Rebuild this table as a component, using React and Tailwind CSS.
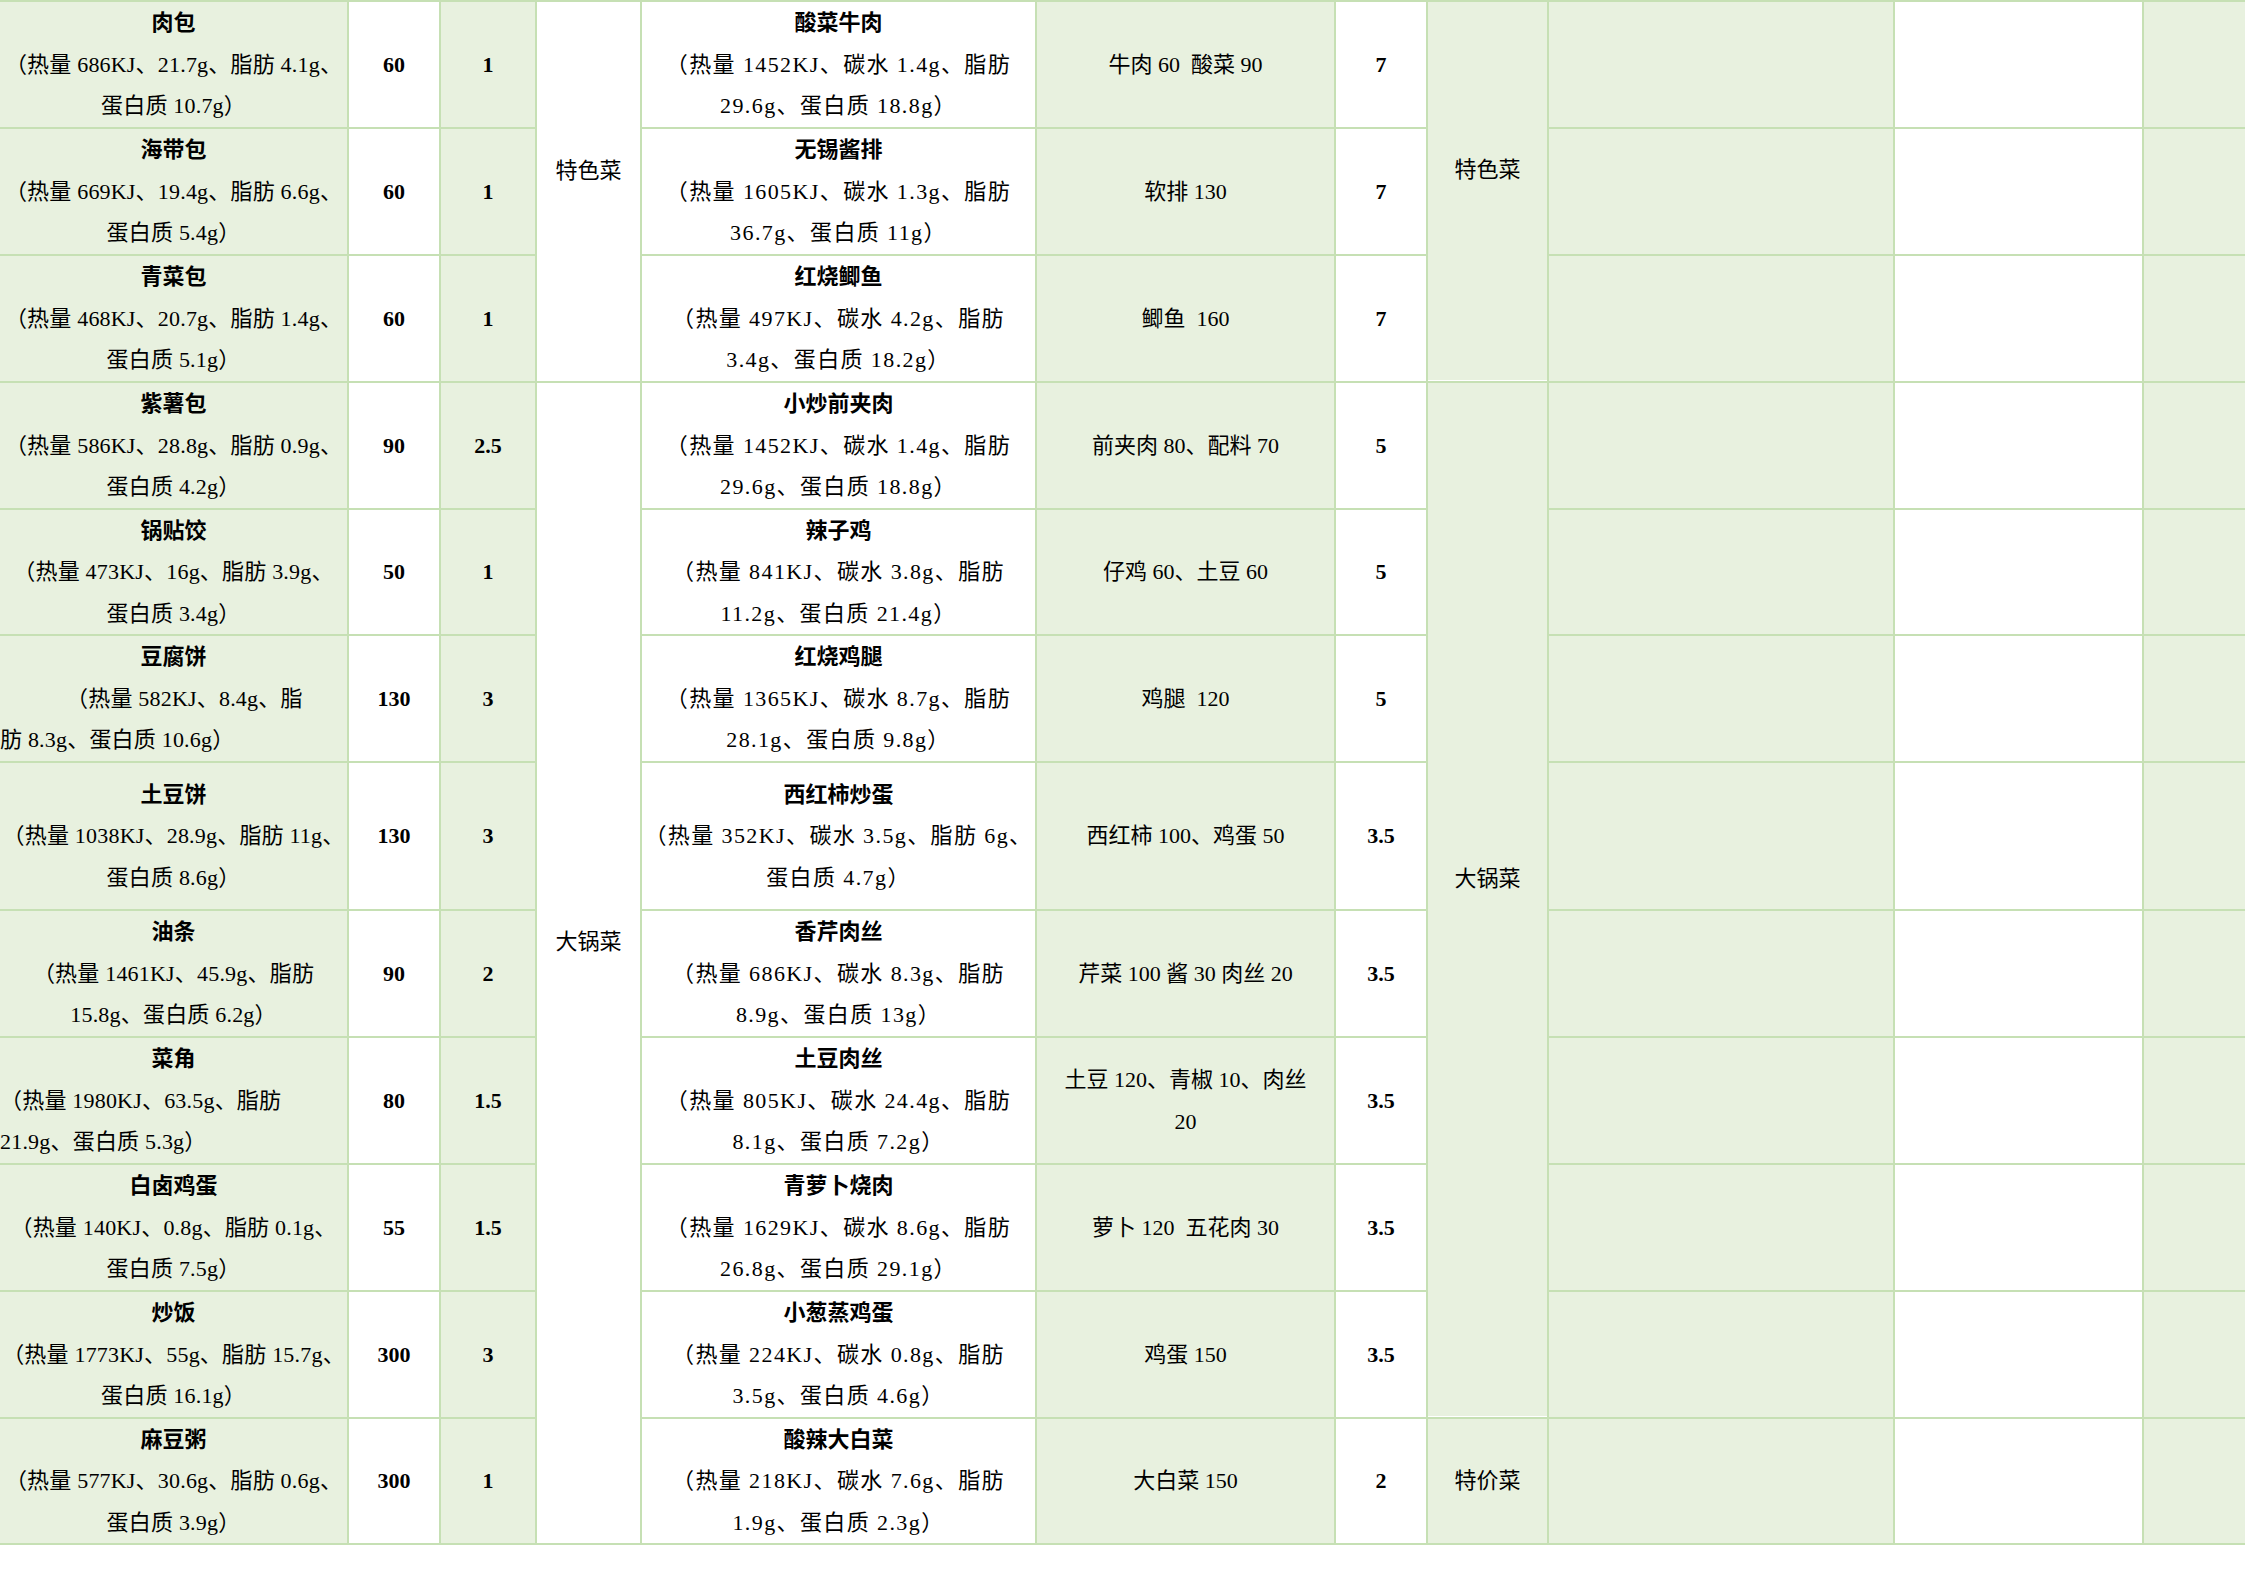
import React from 'react';

const G = 'bg-[#e8f1df]';
const W = 'bg-white';

// 早餐 / 午餐 菜品
const left = [
    { name: '肉包', l: ['（热量 686KJ、21.7g、脂肪 4.1g、', '蛋白质 10.7g）'], w: '60', p: '1' },
    { name: '海带包', l: ['（热量 669KJ、19.4g、脂肪 6.6g、', '蛋白质 5.4g）'], w: '60', p: '1' },
    { name: '青菜包', l: ['（热量 468KJ、20.7g、脂肪 1.4g、', '蛋白质 5.1g）'], w: '60', p: '1' },
    { name: '紫薯包', l: ['（热量 586KJ、28.8g、脂肪 0.9g、', '蛋白质 4.2g）'], w: '90', p: '2.5' },
    { name: '锅贴饺', l: ['（热量 473KJ、16g、脂肪 3.9g、', '蛋白质 3.4g）'], w: '50', p: '1' },
    {
        name: '豆腐饼',
        l: [
            { t: '（热量 582KJ、8.4g、脂', cls: 'self-start pl-[66px]' },
            { t: '肪 8.3g、蛋白质 10.6g）', cls: 'self-start' },
        ],
        w: '130', p: '3',
    },
    { name: '土豆饼', l: ['（热量 1038KJ、28.9g、脂肪 11g、', '蛋白质 8.6g）'], w: '130', p: '3' },
    { name: '油条', l: ['（热量 1461KJ、45.9g、脂肪', '15.8g、蛋白质 6.2g）'], w: '90', p: '2' },
    {
        name: '菜角',
        l: [
            { t: '（热量 1980KJ、63.5g、脂肪', cls: 'self-start' },
            { t: '21.9g、蛋白质 5.3g）', cls: 'self-start' },
        ],
        w: '80', p: '1.5',
    },
    { name: '白卤鸡蛋', l: ['（热量 140KJ、0.8g、脂肪 0.1g、', '蛋白质 7.5g）'], w: '55', p: '1.5' },
    { name: '炒饭', l: ['（热量 1773KJ、55g、脂肪 15.7g、', '蛋白质 16.1g）'], w: '300', p: '3' },
    { name: '麻豆粥', l: ['（热量 577KJ、30.6g、脂肪 0.6g、', '蛋白质 3.9g）'], w: '300', p: '1' },
];

const right = [
    { name: '酸菜牛肉', l: ['（热量 1452KJ、碳水 1.4g、脂肪', '29.6g、蛋白质 18.8g）'], ing: ['牛肉 60  酸菜 90'], p: '7' },
    { name: '无锡酱排', l: ['（热量 1605KJ、碳水 1.3g、脂肪', '36.7g、蛋白质 11g）'], ing: ['软排 130'], p: '7' },
    { name: '红烧鲫鱼', l: ['（热量 497KJ、碳水 4.2g、脂肪', '3.4g、蛋白质 18.2g）'], ing: ['鲫鱼  160'], p: '7' },
    { name: '小炒前夹肉', l: ['（热量 1452KJ、碳水 1.4g、脂肪', '29.6g、蛋白质 18.8g）'], ing: ['前夹肉 80、配料 70'], p: '5' },
    { name: '辣子鸡', l: ['（热量 841KJ、碳水 3.8g、脂肪', '11.2g、蛋白质 21.4g）'], ing: ['仔鸡 60、土豆 60'], p: '5' },
    { name: '红烧鸡腿', l: ['（热量 1365KJ、碳水 8.7g、脂肪', '28.1g、蛋白质 9.8g）'], ing: ['鸡腿  120'], p: '5' },
    { name: '西红柿炒蛋', l: ['（热量 352KJ、碳水 3.5g、脂肪 6g、', '蛋白质 4.7g）'], ing: ['西红柿 100、鸡蛋 50'], p: '3.5' },
    { name: '香芹肉丝', l: ['（热量 686KJ、碳水 8.3g、脂肪', '8.9g、蛋白质 13g）'], ing: ['芹菜 100 酱 30 肉丝 20'], p: '3.5' },
    { name: '土豆肉丝', l: ['（热量 805KJ、碳水 24.4g、脂肪', '8.1g、蛋白质 7.2g）'], ing: ['土豆 120、青椒 10、肉丝', '20'], p: '3.5' },
    { name: '青萝卜烧肉', l: ['（热量 1629KJ、碳水 8.6g、脂肪', '26.8g、蛋白质 29.1g）'], ing: ['萝卜 120  五花肉 30'], p: '3.5' },
    { name: '小葱蒸鸡蛋', l: ['（热量 224KJ、碳水 0.8g、脂肪', '3.5g、蛋白质 4.6g）'], ing: ['鸡蛋 150'], p: '3.5' },
    { name: '酸辣大白菜', l: ['（热量 218KJ、碳水 7.6g、脂肪', '1.9g、蛋白质 2.3g）'], ing: ['大白菜 150'], p: '2' },
];

const Cell = ({ bg, className = '', children }) => (
    <div className={`${bg} flex flex-col items-center justify-center text-center min-w-0 ${className}`}>
        {children}
    </div>
);

const Line = ({ children, className = '' }) => (
    <div className={`whitespace-pre ${className}`}>{children}</div>
);

const Dish = ({ name, lines, track }) => (
    <>
        <Line className="font-bold">{name}</Line>
        {lines.map((ln, i) =>
            typeof ln === 'string'
                ? <Line key={i} className={track}>{ln}</Line>
                : <Line key={i} className={`${track} ${ln.cls}`}>{ln.t}</Line>
        )}
    </>
);

const App = () => {
    const cells = [];
    left.forEach((a, i) => {
        const b = right[i];
        cells.push(<Cell key={`a${i}`} bg={G}><Dish name={a.name} lines={a.l} track="tracking-[0.2px]" /></Cell>);
        cells.push(<Cell key={`w${i}`} bg={W} className="font-bold">{a.w}</Cell>);
        cells.push(<Cell key={`p${i}`} bg={G} className="font-bold">{a.p}</Cell>);

        if (i === 0) cells.push(<Cell key="c4a" bg={W} className="row-span-3 pb-[42px]">特色菜</Cell>);
        if (i === 3) cells.push(<Cell key="c4b" bg={W} className="row-span-9 pb-[42px]">大锅菜</Cell>);

        cells.push(<Cell key={`b${i}`} bg={W}><Dish name={b.name} lines={b.l} track="tracking-[1.4px]" /></Cell>);
        cells.push(
            <Cell key={`i${i}`} bg={G}>
                {b.ing.map((t, k) => <Line key={k}>{t}</Line>)}
            </Cell>
        );
        cells.push(<Cell key={`q${i}`} bg={W} className="font-bold">{b.p}</Cell>);

        if (i === 0) cells.push(<Cell key="c8a" bg={G} className="row-span-3 pb-[42px] border-b border-white">特色菜</Cell>);
        if (i === 3) cells.push(<Cell key="c8b" bg={G} className="row-span-8 pb-[42px] border-b border-white">大锅菜</Cell>);
        if (i === 11) cells.push(<Cell key="c8c" bg={G}>特价菜</Cell>);

        cells.push(<Cell key={`x${i}`} bg={G} />);
        cells.push(<Cell key={`y${i}`} bg={W} />);
        cells.push(<Cell key={`z${i}`} bg={G} />);
    });

    return (
        <div className="w-full min-h-screen bg-white overflow-hidden font-['Liberation_Serif','Noto_Sans_CJK_SC',serif] text-[22px] leading-[41.5px] text-black">
            <div className="grid grid-cols-[347px_90px_94px_103px_393px_297px_90px_119px_344px_247px_1fr] grid-rows-[125px_125px_125px_125px_124px_125px_146px_125px_125px_125px_125px_124px] gap-[2px] py-[2px] bg-[#c6e0b4]">
                {cells}
            </div>
        </div>
    );
};

export default App;
